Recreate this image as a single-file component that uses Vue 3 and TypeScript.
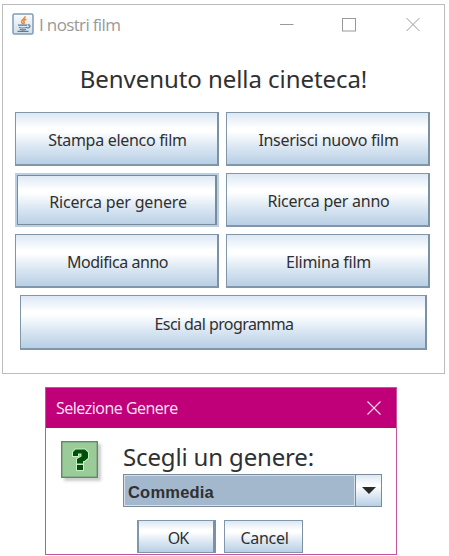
<script setup lang="ts">
import { ref } from 'vue'

interface MenuAction {
  id: string
  label: string
}

const actions: MenuAction[] = [
  { id: 'print', label: 'Stampa elenco film' },
  { id: 'insert', label: 'Inserisci nuovo film' },
  { id: 'genre', label: 'Ricerca per genere' },
  { id: 'year', label: 'Ricerca per anno' },
  { id: 'edit', label: 'Modifica anno' },
  { id: 'delete', label: 'Elimina film' },
]
const focused = ref('genre')
const genre = ref('Commedia')
</script>

<template>
  <main class="desktop">
    <section class="window">
      <header class="titlebar">
        <svg class="java" width="22" height="22" viewBox="0 0 22 22" fill="none">
          <defs>
            <linearGradient id="tile" x1="0" y1="0" x2="0" y2="1">
              <stop offset="0" stop-color="#fafbfc" />
              <stop offset="1" stop-color="#d3dee8" />
            </linearGradient>
          </defs>
          <rect x="1" y="1" width="20" height="20" rx="1.5" fill="url(#tile)" stroke="#7f9cb8" stroke-width="1.5" />
          <path d="M13 3.200c.8 2.300-3.800 3.200-3.400 5.400.1 1 .9 1.500 1 2.600M14.300 6.200c-1.900.5-3 1.500-2.400 2.500.5.8.5 1.600-.4 2.300" stroke="#ec8a3c" stroke-width="1.600" />
          <path d="M6 12.200h9M7 14.200c2 1 6 1 8 0M7.800 16.200c2 .8 4.500.8 6.200 0M5.500 18.300h11M15.500 12c3.400-.8 3.400 2.500-.3 3.200" stroke="#557c9f" stroke-width="1.200" />
        </svg>
        <span class="caption">I nostri film</span>
        <svg class="controls" width="144" height="16" viewBox="0 0 144 16" fill="none" stroke="#999" stroke-width="1">
          <path d="M1 7.500h13.500" />
          <rect x="63.500" y="1.500" width="13" height="12.500" />
          <path d="M127.500 1l13 13M140.500 1l-13 13" />
        </svg>
      </header>
      <h1 class="welcome"><span>Benvenuto nella cineteca!</span></h1>
      <div class="menu">
        <button v-for="a in actions" :key="a.id" class="btn" :class="[a.id, { focused: focused === a.id }]" @click="focused = a.id">
          <span>{{ a.label }}</span>
        </button>
      </div>
      <button class="btn exit"><span>Esci dal programma</span></button>
    </section>

    <section class="dialog">
      <header class="dialog-bar">
        <span class="dialog-caption">Selezione Genere</span>
        <svg width="14" height="14" viewBox="0 0 14 14" stroke="#fbd9ef" stroke-width="1.100"><path d="M.5.5l13 13M13.500.5l-13 13" /></svg>
      </header>
      <div class="dialog-body">
        <svg class="question" width="44" height="44" viewBox="0 0 44 44">
          <rect class="shade" x="4" y="4" width="37" height="37" fill="#aaa" />
          <rect x="1.700" y="1.700" width="35.600" height="35.600" fill="#99cc99" stroke="#628968" stroke-width="1.400" />
          <g stroke="#c9edc6" stroke-width="2" paint-order="stroke" fill="#005008">
            <path d="M15.500 9.500h9.500l3 3v5.500l-3.500 3h-1.500v2.500h-6v-4.500l4.500-2.500v-3h-3.500v2.500h-5v-4z" />
            <path d="M17 25h6v5h-6z" />
          </g>
        </svg>
        <div class="form">
          <label class="prompt"><span>Scegli un genere:</span></label>
          <div class="combo">
            <span class="value">{{ genre }}</span>
            <span class="arrow"><svg width="14" height="7" viewBox="0 0 14 7"><path d="M0 0h14L7 7z" fill="#2b2b2b" /></svg></span>
          </div>
        </div>
      </div>
      <footer class="answers">
        <button class="btn small ok"><span>OK</span></button>
        <button class="btn small cancel"><span>Cancel</span></button>
      </footer>
    </section>
  </main>
</template>

<style>
body { background: #fff; overflow: hidden; }
</style>

<style scoped>
.desktop {
  box-sizing: border-box;
  width: 449px;
  height: 556px;
  padding: 4px 0 0 2px;
  overflow: hidden;
  font-family: "Noto Sans", "Open Sans", sans-serif;
  color: #303030;
}
.window {
  box-sizing: border-box;
  width: 443px;
  height: 370px;
  border: 1px solid #bcbcbc;
}
.titlebar {
  display: flex;
  height: 39px;
  align-items: center;
  padding: 0 21px 0 9px;
  box-sizing: border-box;
}
.java { flex: none; margin-bottom: 1px; }
.caption {
  margin-left: 5px;
  font: 17px/24px "Open Sans", sans-serif;
  letter-spacing: -0.65px;
  color: #999;
  white-space: nowrap;
}
.controls { margin-left: auto; }
.welcome {
  display: flex;
  justify-content: center;
  margin: 0;
  height: 68px;
  padding-top: 18px;
  box-sizing: border-box;
  font-size: 24px;
  font-weight: 400;
  line-height: 34px;
  letter-spacing: -0.06px;
  white-space: nowrap;
}
.menu {
  display: grid;
  grid-template-columns: 204px 204px;
  grid-auto-rows: 54px;
  column-gap: 7px;
  row-gap: 7px;
  padding-left: 12px;
}
.btn {
  display: flex;
  align-items: center;
  justify-content: center;
  box-sizing: border-box;
  margin: 0;
  padding: 3px 0 0 2px;
  border: 1px solid #8296aa;
  border-right: 2px solid #7c90a6;
  border-bottom-width: 2px;
  background: linear-gradient(#dce8f4 0%, #fff 30%, #fff 36%, #dce8f3 65%, #b8cfe5 100%);
  color: #303030;
  font-family: inherit;
  font-size: 16px;
  line-height: 22px;
  letter-spacing: -0.3px;
  white-space: nowrap;
}
.genre { letter-spacing: -0.17px; }
.year, .delete { letter-spacing: -0.25px; }
.edit { letter-spacing: -0.45px; }
.btn.focused {
  border: 2px solid #b8cfe5;
  box-shadow: inset 1px 1px #7a8a99, inset -2px -1px #7a8a99;
}
.exit {
  width: 407px;
  height: 55px;
  margin: 7px 0 0 17px;
  letter-spacing: -0.58px;
}
.dialog {
  box-sizing: border-box;
  width: 352px;
  height: 168px;
  margin: 13px 0 0 43px;
  border: 1px solid #c4549c;
  overflow: hidden;
}
.dialog-bar {
  display: flex;
  align-items: center;
  justify-content: space-between;
  box-sizing: border-box;
  height: 41px;
  margin: -1px -1px 0;
  padding: 0 16px 0 11px;
  background: #c00078;
}
.dialog-caption {
  font: 16px/22px "Open Sans", sans-serif;
  letter-spacing: -0.5px;
  color: #fce8f5;
  white-space: nowrap;
}
.dialog-body {
  display: flex;
  padding: 13px 0 0 14px;
}
.question { flex: none; margin-top: -1px; }
.shade { filter: blur(1.500px); opacity: .6; }
.form { margin-left: 19px; }
.prompt {
  display: block;
  height: 33px;
  font-size: 24px;
  line-height: 31px;
  letter-spacing: -0.15px;
  white-space: nowrap;
}
.combo {
  display: flex;
  box-sizing: border-box;
  width: 259px;
  height: 33px;
  border: 1px solid #7a8a99;
  background: #a3b8cc;
}
.value {
  display: flex;
  flex: 1;
  align-items: center;
  padding: 2px 0 0 4px;
  box-shadow: inset 0 0 0 1px #d3e0ec;
  font: bold 16.500px/20px "Liberation Sans", Arial, sans-serif;
  letter-spacing: 0.2px;
}
.arrow {
  display: flex;
  align-items: center;
  justify-content: center;
  width: 25px;
  border-left: 1px solid #7a8a99;
  background: linear-gradient(#dce8f4, #fff 35%, #b8cfe5);
}
.answers {
  display: flex;
  gap: 8px;
  padding: 13px 0 0 91px;
}
.small {
  width: 79px;
  height: 33px;
  border-width: 1px;
}
.ok { border-right-width: 3px; border-left-width: 2px; padding-left: 4px; letter-spacing: -1px; }
</style>
